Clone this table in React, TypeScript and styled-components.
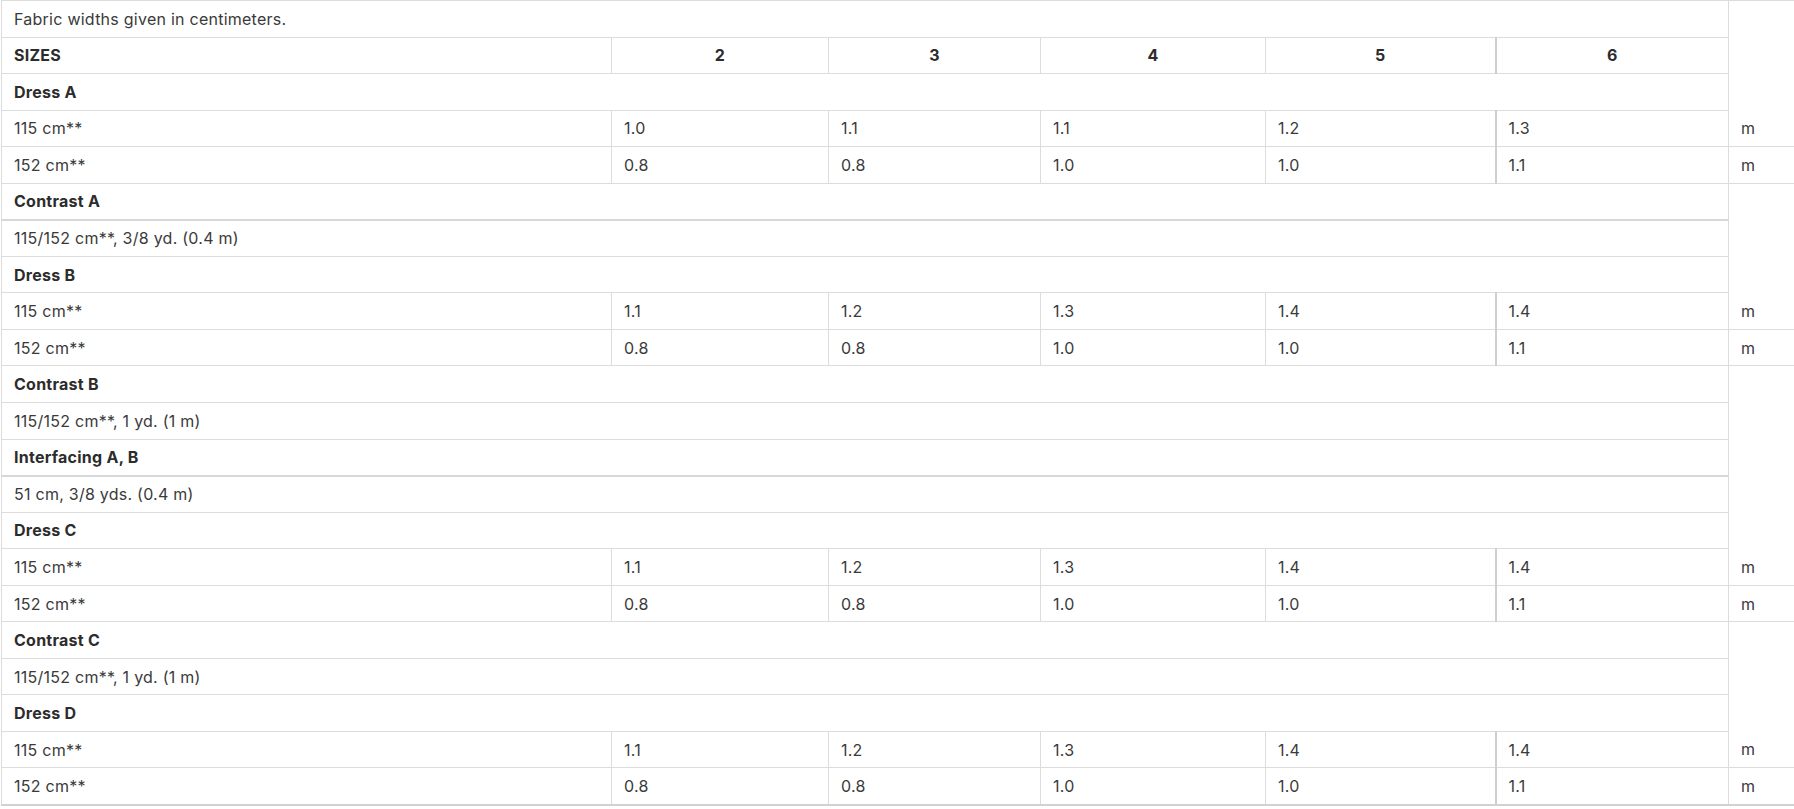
import React from "react";
import styled, { createGlobalStyle } from "styled-components";

const Global = createGlobalStyle`
  html, body {
    margin: 0;
    padding: 0;
    background: #fff;
  }
  body {
    font-family: Inter, "Open Sans", "Liberation Sans", sans-serif;
    color: #333;
    overflow: hidden;
  }
`;

const Wrap = styled.div`
  padding-left: 1px;
`;

const Table = styled.table`
  width: 1793px;
  table-layout: fixed;
  border-collapse: collapse;
  border-top: 1px solid #dcdcdc;
  font-size: 16px;
  letter-spacing: 0.25px;
  font-variant-numeric: proportional-nums;
`;

const Row = styled.tr<{ $thick?: boolean }>`
  height: 36.55px;
  & > td {
    border-bottom: ${(p) => (p.$thick ? "2px solid #d8d8d8" : "1px solid #dcdcdc")};
  }
`;

const LastRow = styled(Row)`
  & > td {
    border-bottom: 2px solid #d2d2d2;
  }
`;

const Cell = styled.td<{ $bold?: boolean; $center?: boolean; $split?: boolean }>`
  padding: 0 12px;
  border-left: 1px solid #dcdcdc;
  border-right: ${(p) => (p.$split ? "2px solid #cfcfcf" : "1px solid #dcdcdc")};
  font-weight: ${(p) => (p.$bold ? 700 : 400)};
  text-align: ${(p) => (p.$center ? "center" : "left")};
  color: ${(p) => (p.$bold ? "#2c2c2c" : "#3a3a3a")};
  white-space: nowrap;
  vertical-align: middle;
`;

const UnitCell = styled.td`
  padding: 0 12px;
  border-left: 1px solid #dcdcdc;
  color: #3a3a3a;
`;

const widths = [610, 217, 212, 225, 230, 233, 66];

type Block =
  | { kind: "title"; text: string; thick?: boolean }
  | { kind: "note"; text: string }
  | { kind: "data"; label: string; values: string[] };

const blocks: Block[] = [
  { kind: "title", text: "Dress A" },
  { kind: "data", label: "115 cm**", values: ["1.0", "1.1", "1.1", "1.2", "1.3"] },
  { kind: "data", label: "152 cm**", values: ["0.8", "0.8", "1.0", "1.0", "1.1"] },
  { kind: "title", text: "Contrast A", thick: true },
  { kind: "note", text: "115/152 cm**, 3/8 yd. (0.4 m)" },
  { kind: "title", text: "Dress B" },
  { kind: "data", label: "115 cm**", values: ["1.1", "1.2", "1.3", "1.4", "1.4"] },
  { kind: "data", label: "152 cm**", values: ["0.8", "0.8", "1.0", "1.0", "1.1"] },
  { kind: "title", text: "Contrast B" },
  { kind: "note", text: "115/152 cm**, 1 yd. (1 m)" },
  { kind: "title", text: "Interfacing A, B", thick: true },
  { kind: "note", text: "51 cm, 3/8 yds. (0.4 m)" },
  { kind: "title", text: "Dress C" },
  { kind: "data", label: "115 cm**", values: ["1.1", "1.2", "1.3", "1.4", "1.4"] },
  { kind: "data", label: "152 cm**", values: ["0.8", "0.8", "1.0", "1.0", "1.1"] },
  { kind: "title", text: "Contrast C" },
  { kind: "note", text: "115/152 cm**, 1 yd. (1 m)" },
  { kind: "title", text: "Dress D" },
  { kind: "data", label: "115 cm**", values: ["1.1", "1.2", "1.3", "1.4", "1.4"] },
  { kind: "data", label: "152 cm**", values: ["0.8", "0.8", "1.0", "1.0", "1.1"] },
];

function DataCells({ label, values }: { label: string; values: string[] }) {
  return (
    <>
      <Cell>{label}</Cell>
      {values.map((v, i) => (
        <Cell key={i} $split={i === 3}>
          {v}
        </Cell>
      ))}
      <UnitCell>m</UnitCell>
    </>
  );
}

export default function App() {
  return (
    <Wrap>
      <Global />
      <Table>
        <colgroup>
          {widths.map((w, i) => (
            <col key={i} style={{ width: w }} />
          ))}
        </colgroup>
        <tbody>
          <Row>
            <Cell colSpan={6}>Fabric widths given in centimeters.</Cell>
          </Row>
          <Row>
            <Cell $bold>SIZES</Cell>
            {["2", "3", "4", "5", "6"].map((s, i) => (
              <Cell key={s} $bold $center $split={i === 3}>
                {s}
              </Cell>
            ))}
          </Row>
          {blocks.map((b, i) => {
            const last = i === blocks.length - 1;
            if (b.kind === "data") {
              const R = last ? LastRow : Row;
              return (
                <R key={i}>
                  <DataCells label={b.label} values={b.values} />
                </R>
              );
            }
            if (b.kind === "title") {
              return (
                <Row key={i} $thick={b.thick}>
                  <Cell colSpan={6} $bold>
                    {b.text}
                  </Cell>
                </Row>
              );
            }
            return (
              <Row key={i}>
                <Cell colSpan={6}>{b.text}</Cell>
              </Row>
            );
          })}
        </tbody>
      </Table>
    </Wrap>
  );
}
